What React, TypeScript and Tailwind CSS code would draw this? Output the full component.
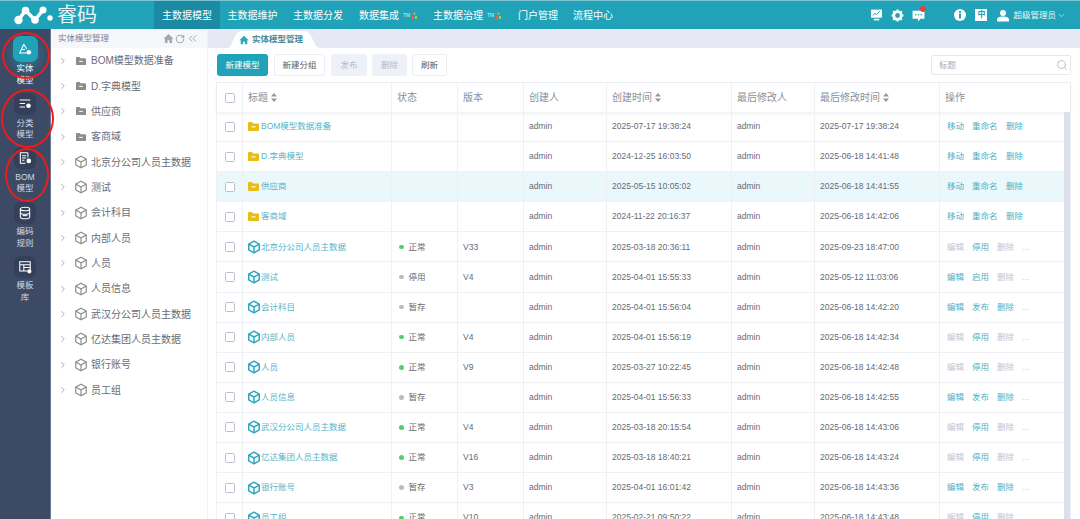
import React from 'react';
import { ChevronRight, ChevronDown, ChevronsLeft, RotateCw, Search } from 'lucide-react';

const FONT = '"Liberation Sans","Noto Sans CJK SC",sans-serif';

const Cube = ({ size = 14, color = '#2ea7c0', w = 2 }: { size?: number; color?: string; w?: number }) => (
  <svg width={size} height={size} viewBox="0 0 24 24" fill="none" stroke={color} strokeWidth={w} strokeLinejoin="round" className="shrink-0">
    <path d="M12 2 21 7v10l-9 5-9-5V7z" />
    <path d="M3 7l9 5 9-5M12 12v10" />
  </svg>
);

const Folder = ({ color = '#e8bd14', mark = '#fff', size = 11 }: { color?: string; mark?: string; size?: number }) => (
  <svg width={size} height={size * 0.82} viewBox="0 0 22 18" className="shrink-0">
    <path d="M0 2a2 2 0 0 1 2-2h6l2 3h10a2 2 0 0 1 2 2v11a2 2 0 0 1-2 2H2a2 2 0 0 1-2-2z" fill={color} />
    <rect x="7" y="8.5" width="8" height="2.2" fill={mark} />
  </svg>
);

const Home = ({ color, size }: { color: string; size: number }) => (
  <svg width={size} height={size} viewBox="0 0 24 24" className="shrink-0">
    <path d="M12 2 1 12.5h3.2V22h5.6v-6h4.4v6h5.6v-9.5H23z" fill={color} />
  </svg>
);

const Sort = () => (
  <svg width="6" height="9" viewBox="0 0 6 9" className="ml-[3px] inline-block shrink-0">
    <path d="M3 0 6 3.6H0zM3 9 0 5.4h6z" fill="#8f96a8" />
  </svg>
);

const TM = () => (
  <span className="ml-[4px] flex items-center gap-[2px]">
    <span className="text-[5px] leading-none text-[#d8eef2]">TM</span>
    <svg width="5" height="7" viewBox="0 0 5 7"><path d="M2.5 0 4 2.5H1z" fill="#f2a33a" /><rect x="0" y="4" width="2" height="3" fill="#e8663a" /><rect x="3" y="4" width="2" height="3" fill="#9ccf5a" /></svg>
  </span>
);

const SideIcon = ({ kind }: { kind: string }) => {
  const s = { fill: 'none', stroke: '#fff', strokeWidth: 1.8 };
  return (
    <svg width="14" height="14" viewBox="0 0 24 24">
      {kind === 'entity' && <><path d="M10 4 3 19h12M10 4l5 8M7 13h5" {...s} /><circle cx="18.500" cy="17.500" r="4" fill="#fff" /></>}
      {kind === 'class' && <><path d="M3 5h18M3 11h9M3 17h9" {...s} /><circle cx="18" cy="15" r="4" fill="#fff" /></>}
      {kind === 'bom' && <><path d="M17 3H4v18h9M17 3v8M7 8h7M7 12h7M7 16h4" {...s} /><circle cx="18.500" cy="17" r="4" fill="#fff" /></>}
      {kind === 'code' && <><ellipse cx="12" cy="5" rx="8" ry="3" {...s} /><path d="M4 5v14c0 1.700 3.600 3 8 3s8-1.300 8-3V5M4 11c0 1.700 3.600 3 8 3s8-1.300 8-3" {...s} /><path d="M8 16.500h8" {...s} /></>}
      {kind === 'tpl' && <><path d="M3 3h18v16H3zM3 8h18M10 8v11M10 13h11" {...s} /><circle cx="19.500" cy="19.500" r="3.500" fill="#fff" /></>}
    </svg>
  );
};

const sideItems = [
  { kind: 'entity', a: '实体', b: '模型', active: true },
  { kind: 'class', a: '分类', b: '模型' },
  { kind: 'bom', a: 'BOM', b: '模型' },
  { kind: 'code', a: '编码', b: '规则' },
  { kind: 'tpl', a: '模板', b: '库' },
];

const treeItems: [string, boolean][] = [
  ['BOM模型数据准备', true], ['D.字典模型', true], ['供应商', true], ['客商域', true],
  ['北京分公司人员主数据', false], ['测试', false], ['会计科目', false], ['内部人员', false],
  ['人员', false], ['人员信息', false], ['武汉分公司人员主数据', false], ['亿达集团人员主数据', false],
  ['银行账号', false], ['员工组', false],
];

type Row = {
  t: string; f?: boolean; s?: string; v?: string; c: string; m: string;
  a?: [string, boolean, string, boolean, string, boolean];
};

const rows: Row[] = [
  { t: 'BOM模型数据准备', f: true, c: '2025-07-17 19:38:24', m: '2025-07-17 19:38:24' },
  { t: 'D.字典模型', f: true, c: '2024-12-25 16:03:50', m: '2025-06-18 14:41:48' },
  { t: '供应商', f: true, c: '2025-05-15 10:05:02', m: '2025-06-18 14:41:55' },
  { t: '客商域', f: true, c: '2024-11-22 20:16:37', m: '2025-06-18 14:42:06' },
  { t: '北京分公司人员主数据', s: '正常', v: 'V33', c: '2025-03-18 20:36:11', m: '2025-09-23 18:47:00', a: ['编辑', false, '停用', true, '删除', false] },
  { t: '测试', s: '停用', v: 'V4', c: '2025-04-01 15:55:33', m: '2025-05-12 11:03:06', a: ['编辑', true, '启用', true, '删除', false] },
  { t: '会计科目', s: '暂存', c: '2025-04-01 15:56:04', m: '2025-06-18 14:42:20', a: ['编辑', true, '发布', true, '删除', true] },
  { t: '内部人员', s: '正常', v: 'V4', c: '2025-04-01 15:56:19', m: '2025-06-18 14:42:34', a: ['编辑', false, '停用', true, '删除', false] },
  { t: '人员', s: '正常', v: 'V9', c: '2025-03-27 10:22:45', m: '2025-06-18 14:42:48', a: ['编辑', false, '停用', true, '删除', false] },
  { t: '人员信息', s: '暂存', c: '2025-04-01 15:56:33', m: '2025-06-18 14:42:55', a: ['编辑', true, '发布', true, '删除', true] },
  { t: '武汉分公司人员主数据', s: '正常', v: 'V4', c: '2025-03-18 20:15:54', m: '2025-06-18 14:43:06', a: ['编辑', false, '停用', true, '删除', false] },
  { t: '亿达集团人员主数据', s: '正常', v: 'V16', c: '2025-03-18 18:40:21', m: '2025-06-18 14:43:24', a: ['编辑', false, '停用', true, '删除', false] },
  { t: '银行账号', s: '暂存', v: 'V3', c: '2025-04-01 16:01:42', m: '2025-06-18 14:43:36', a: ['编辑', true, '发布', true, '删除', true] },
  { t: '员工组', s: '正常', v: 'V10', c: '2025-02-21 09:50:22', m: '2025-06-18 14:43:48', a: ['编辑', false, '停用', true, '删除', false] },
];

const GRID = 'grid grid-cols-[26px_149px_66px_66px_83px_125px_83px_125px_1fr]';
const CELL = 'flex items-center border-r border-[#eef0f4] min-w-0';

const nav: [string, boolean, string][] = [
  ['主数据模型', false, 'w-[66px] bg-[#1a8ba3] justify-center'],
  ['主数据维护', false, 'w-[65px] justify-center'],
  ['主数据分发', false, 'w-[66px] justify-center'],
  ['数据集成', true, 'w-[82px] pl-[8px]'],
  ['主数据治理', true, 'w-[85px]'],
  ['门户管理', false, 'w-[55px]'],
  ['流程中心', false, 'w-[50px]'],
];

const Btn = ({ text, cls }: { text: string; cls: string }) => (
  <div className={`flex h-[22px] items-center justify-center rounded-[3px] text-[8.5px] ${cls}`}>{text}</div>
);

export default function App() {
  return (
    <div className="relative flex h-[519px] w-[1080px] flex-col overflow-hidden bg-white" style={{ fontFamily: FONT }}>
      {/* top bar */}
      <header className="flex h-[29px] shrink-0 items-stretch border-t border-[#7cc4d2] bg-[#20a3b9] text-white">
        <div className="flex w-[154px] shrink-0 items-center pl-[14px]">
          <svg width="39" height="20" viewBox="0 0 39 20" className="shrink-0">
            <path d="M4.500 15 11.500 5.500 21 15 29 5" fill="none" stroke="#fff" strokeWidth="3.500" strokeLinejoin="round" />
            <circle cx="4.500" cy="15" r="4.200" fill="#fff" />
            <circle cx="11.500" cy="5.500" r="3.800" fill="#fff" />
            <circle cx="21" cy="15" r="3.800" fill="#fff" />
            <circle cx="29" cy="5" r="3.500" fill="#fff" />
            <circle cx="36" cy="13" r="2.700" fill="#fff" />
          </svg>
          <span className="ml-[4px] text-[20px] leading-none text-[#e8f6f8]">睿码</span>
        </div>
        <nav className="flex items-stretch text-[10px]">
          {nav.map(([t, tm, cls]) => (
            <div key={t} className={`flex items-center ${cls}`}>
              <span className="whitespace-nowrap">{t}</span>
              {tm && <TM />}
            </div>
          ))}
        </nav>
        <div className="ml-auto flex items-center pr-[14px]">
          <svg width="13" height="14" viewBox="0 0 24 24" className="mr-[8px]"><path d="M2 2h20v15H2z" fill="#fff" /><path d="M5 13l4-4 3 2 6-6" fill="none" stroke="#20a3b9" strokeWidth="1.800" /><rect x="7" y="19" width="10" height="3" fill="#fff" /></svg>
          <svg width="13" height="13" viewBox="0 0 24 24" className="mr-[8px]"><circle cx="12" cy="12" r="7" fill="none" stroke="#fff" strokeWidth="5" /><path d="M12 1v5M12 18v5M1 12h5M18 12h5M4 4l4 4M16 16l4 4M20 4l-4 4M8 16l-4 4" stroke="#fff" strokeWidth="3.500" /></svg>
          <div className="relative mr-[29px]">
            <svg width="13" height="13" viewBox="0 0 24 24"><path d="M1 3h22v15h-7l-5 5v-5H1z" fill="#fff" /><circle cx="7" cy="10.500" r="1.500" fill="#20a3b9" /><circle cx="12" cy="10.500" r="1.500" fill="#20a3b9" /><circle cx="17" cy="10.500" r="1.500" fill="#20a3b9" /></svg>
            <span className="absolute -right-[1px] -top-[3px] h-[6px] w-[6px] rounded-full bg-[#e8423a]" />
          </div>
          <svg width="12" height="12" viewBox="0 0 24 24" className="mr-[9px]"><circle cx="12" cy="12" r="12" fill="#fff" /><rect x="10" y="10" width="4" height="9" fill="#20a3b9" /><circle cx="12" cy="6.500" r="2.300" fill="#20a3b9" /></svg>
          <div className="mr-[10px] flex h-[12px] w-[12px] items-center justify-center bg-white text-[8px] font-bold leading-none text-[#20a3b9]">中</div>
          <svg width="12" height="13" viewBox="0 0 24 24" className="mr-[4px]"><circle cx="12" cy="7" r="6" fill="#fff" /><path d="M0 24v-4c0-4 5-6 12-6s12 2 12 6v4z" fill="#fff" /></svg>
          <span className="whitespace-nowrap text-[8.500px] text-[#e8f6f8]">超级管理员</span>
          <ChevronDown size={9} className="ml-[1px]" strokeWidth={1.500} />
        </div>
      </header>

      <div className="flex min-h-0 flex-1">
        {/* side rail */}
        <aside className="flex w-[51px] shrink-0 flex-col items-center border-r border-[#6d7994] bg-[#3c4a66] pt-[7px]">
          {sideItems.map((it) => (
            <div key={it.kind} className={`flex flex-col items-center ${it.active ? 'h-[57px]' : 'h-[54.300px]'}`}>
              <div className={`flex items-center justify-center rounded-[7px] ${it.active ? 'h-[26px] w-[25px] bg-[#20a3b9] shadow-[0_6px_14px_rgba(32,163,185,0.5)]' : 'h-[22px] w-[22px] bg-[#343f5a]'}`}>
                <SideIcon kind={it.kind} />
              </div>
              <div className={`text-center text-[8.500px] leading-[11.500px] ${it.active ? 'mt-[1px] text-white' : 'mt-[2.500px] text-[#d3d8e3]'}`}>
                <div>{it.a}</div>
                <div>{it.b}</div>
              </div>
            </div>
          ))}
        </aside>

        {/* tree */}
        <section className="flex w-[157px] shrink-0 flex-col border-r border-[#eef0f4] bg-white">
          <div className="flex h-[19px] shrink-0 items-center bg-[#f6f7fa] pl-[7px] pr-[8px]">
            <span className="text-[8.500px] text-[#7d8391]">实体模型管理</span>
            <div className="ml-auto flex items-center gap-[1px] text-[#a3a8b3]">
              <Home color="#a3a8b3" size={11} />
              <RotateCw size={10} strokeWidth={2.500} />
              <ChevronsLeft size={13} strokeWidth={1.800} />
            </div>
          </div>
          <div>
            {treeItems.map(([t, f]) => (
              <div key={t} className="flex h-[25.350px] items-center pl-[7px] text-[10px] text-[#676c78]">
                <ChevronRight size={10} className="text-[#8d929c]" strokeWidth={1.800} />
                <div className="ml-[7px] mr-[5px] flex w-[11px] justify-center">
                  {f ? <Folder color="#8c8c8c" size={10} /> : <Cube size={14} color="#8a8a8a" w={2} />}
                </div>
                <span className="whitespace-nowrap">{t}</span>
              </div>
            ))}
          </div>
        </section>

        {/* main */}
        <main className="flex min-w-0 flex-1 flex-col">
          <div className="flex h-[19px] shrink-0 items-end bg-[#e6e9f3] pl-[20px]">
            <div className="relative flex h-[17px] w-[92px] items-center justify-center gap-[3px] pr-[6px]">
              <svg width="92" height="17" viewBox="0 0 92 17" className="absolute inset-0">
                <path d="M0 17C5 17 5 0 14 0H76C85 0 85 17 92 17Z" fill="#fff" />
              </svg>
              <span className="relative"><Home color="#2ea7c0" size={10} /></span>
              <span className="relative text-[8.500px] font-bold text-[#4d8b99]">实体模型管理</span>
            </div>
          </div>

          <div className="flex h-[34px] shrink-0 items-center pl-[9px] pr-[9px]">
            <Btn text="新建模型" cls="w-[51px] bg-[#20a3b9] text-white" />
            <Btn text="新建分组" cls="ml-[6px] w-[51px] border border-[#eceef3] bg-white text-[#555b68]" />
            <Btn text="发布" cls="ml-[6px] w-[36px] bg-[#eff1f8] text-[#b5b9c6]" />
            <Btn text="删除" cls="ml-[5px] w-[35px] bg-[#eff1f8] text-[#b5b9c6]" />
            <Btn text="刷新" cls="ml-[5px] w-[35px] border border-[#eceef3] bg-white text-[#555b68]" />
            <div className="ml-auto flex h-[20px] w-[140px] items-center rounded-[2px] border border-[#e6e8ee] pl-[7px] pr-[2px]">
              <span className="text-[8.500px] text-[#a9adb8]">标题</span>
              <Search size={12} className="ml-auto text-[#a9adb8]" strokeWidth={1.500} />
            </div>
          </div>

          <div className="relative ml-[8px] mr-[9px] flex min-h-0 flex-1 flex-col border-l border-r border-t border-[#eef0f4]">
            <div className={`${GRID} h-[29px] shrink-0 text-[10px] text-[#8a8f9c] shadow-[0_2px_4px_rgba(120,130,150,0.12)]`}>
              <div className={`${CELL} justify-center`}><span className="h-[10px] w-[10px] rounded-[1.500px] border border-[#b9bfd4]" /></div>
              <div className={`${CELL} pl-[5px]`}>标题<Sort /></div>
              <div className={`${CELL} pl-[5px]`}>状态</div>
              <div className={`${CELL} pl-[5px]`}>版本</div>
              <div className={`${CELL} pl-[5px]`}>创建人</div>
              <div className={`${CELL} pl-[5px]`}>创建时间<Sort /></div>
              <div className={`${CELL} pl-[5px]`}>最后修改人</div>
              <div className={`${CELL} pl-[5px]`}>最后修改时间<Sort /></div>
              <div className="flex items-center pl-[5px]">操作</div>
            </div>
            {rows.map((r, i) => (
              <div key={r.t} className={`${GRID} h-[30.100px] shrink-0 border-b border-[#f0f1f5] text-[8.500px] text-[#666b76] ${i === 2 ? 'bg-[#eaf8fb]' : ''}`}>
                <div className={`${CELL} justify-center`}><span className="h-[10px] w-[10px] rounded-[1.500px] border border-[#b9bfd4] bg-white" /></div>
                <div className={`${CELL} pl-[5px] text-[#55b4c8]`}>
                  <div className="mr-[2px] flex w-[11px] justify-center">
                    {r.f ? <Folder size={11} /> : <Cube size={14} w={2.600} />}
                  </div>
                  <span className="whitespace-nowrap">{r.t}</span>
                </div>
                <div className={`${CELL} pl-[7px]`}>
                  {r.s && (
                    <>
                      <span className={`mr-[5px] h-[4.500px] w-[4.500px] rounded-full ${r.s === '正常' ? 'bg-[#4fd06b]' : 'bg-[#bdb9c0]'}`} />
                      {r.s}
                    </>
                  )}
                </div>
                <div className={`${CELL} pl-[5px]`}>{r.v}</div>
                <div className={`${CELL} pl-[5px]`}>admin</div>
                <div className={`${CELL} pl-[5px]`}>{r.c}</div>
                <div className={`${CELL} pl-[5px]`}>admin</div>
                <div className={`${CELL} pl-[5px]`}>{r.m}</div>
                <div className="flex items-center pl-[7px]">
                  {r.a ? (
                    <>
                      <span className={`w-[25px] ${r.a[1] ? 'text-[#4fb0c4]' : 'text-[#c3c6ce]'}`}>{r.a[0]}</span>
                      <span className={`w-[25px] ${r.a[3] ? 'text-[#4fb0c4]' : 'text-[#c3c6ce]'}`}>{r.a[2]}</span>
                      <span className={`w-[25px] ${r.a[5] ? 'text-[#4fb0c4]' : 'text-[#c3c6ce]'}`}>{r.a[4]}</span>
                      <span className="text-[#a9d6e2]">...</span>
                    </>
                  ) : (
                    <>
                      <span className="w-[25px] text-[#4fb0c4]">移动</span>
                      <span className="w-[34px] text-[#4fb0c4]">重命名</span>
                      <span className="text-[#4fb0c4]">删除</span>
                    </>
                  )}
                </div>
              </div>
            ))}
            <div className="absolute bottom-0 right-0 top-[29px] w-[6px] bg-[#dcdfee]" />
          </div>
        </main>
      </div>

      {/* red annotation rings */}
      <div className="pointer-events-none absolute left-[2px] top-[32px] h-[47px] w-[48px] rounded-[50%] border-2 border-[#ee1c1c]" />
      <div className="pointer-events-none absolute left-[1px] top-[89px] h-[59px] w-[53px] rounded-[50%] border-2 border-[#ee1c1c]" />
      <div className="pointer-events-none absolute left-[5px] top-[148px] h-[54px] w-[44px] rounded-[50%] border-2 border-[#ee1c1c]" />
    </div>
  );
}
